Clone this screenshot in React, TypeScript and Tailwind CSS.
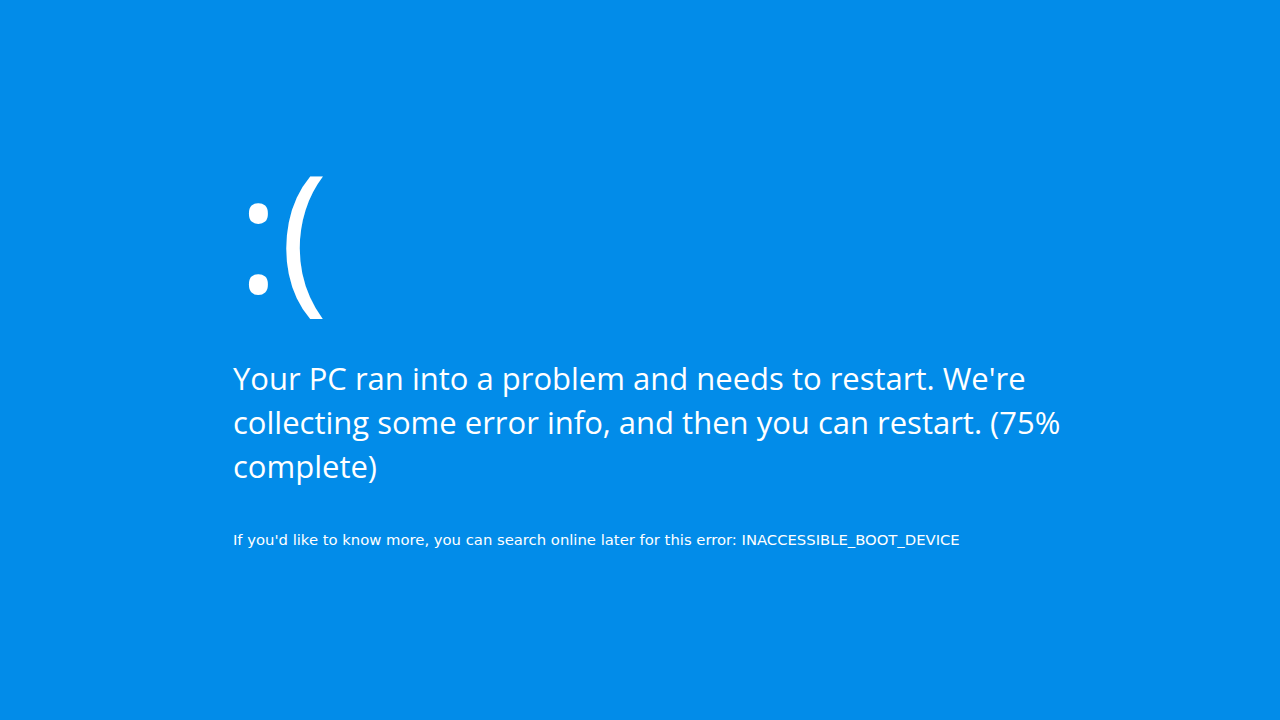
export default function App() {
  return (
    <div className="w-[1280px] h-[720px] bg-[#028ce9] text-white overflow-hidden font-['Open_Sans',sans-serif]">
      <div className="flex flex-col pl-[233px] pt-[135px]">
        <p className="ml-[4px] h-[190px] text-[163px] leading-[190px]">:(</p>
        <p className="mt-[31px] w-[870px] text-[31px] leading-[44px]">
          Your PC ran into a problem and needs to restart. We're collecting some
          error info, and then you can restart. (75% complete)
        </p>
        <p className="mt-[42px] text-[14.8px] leading-[20px] font-['DejaVu_Sans',sans-serif]">
          If you'd like to know more, you can search online later for this
          error: INACCESSIBLE_BOOT_DEVICE
        </p>
      </div>
    </div>
  );
}
